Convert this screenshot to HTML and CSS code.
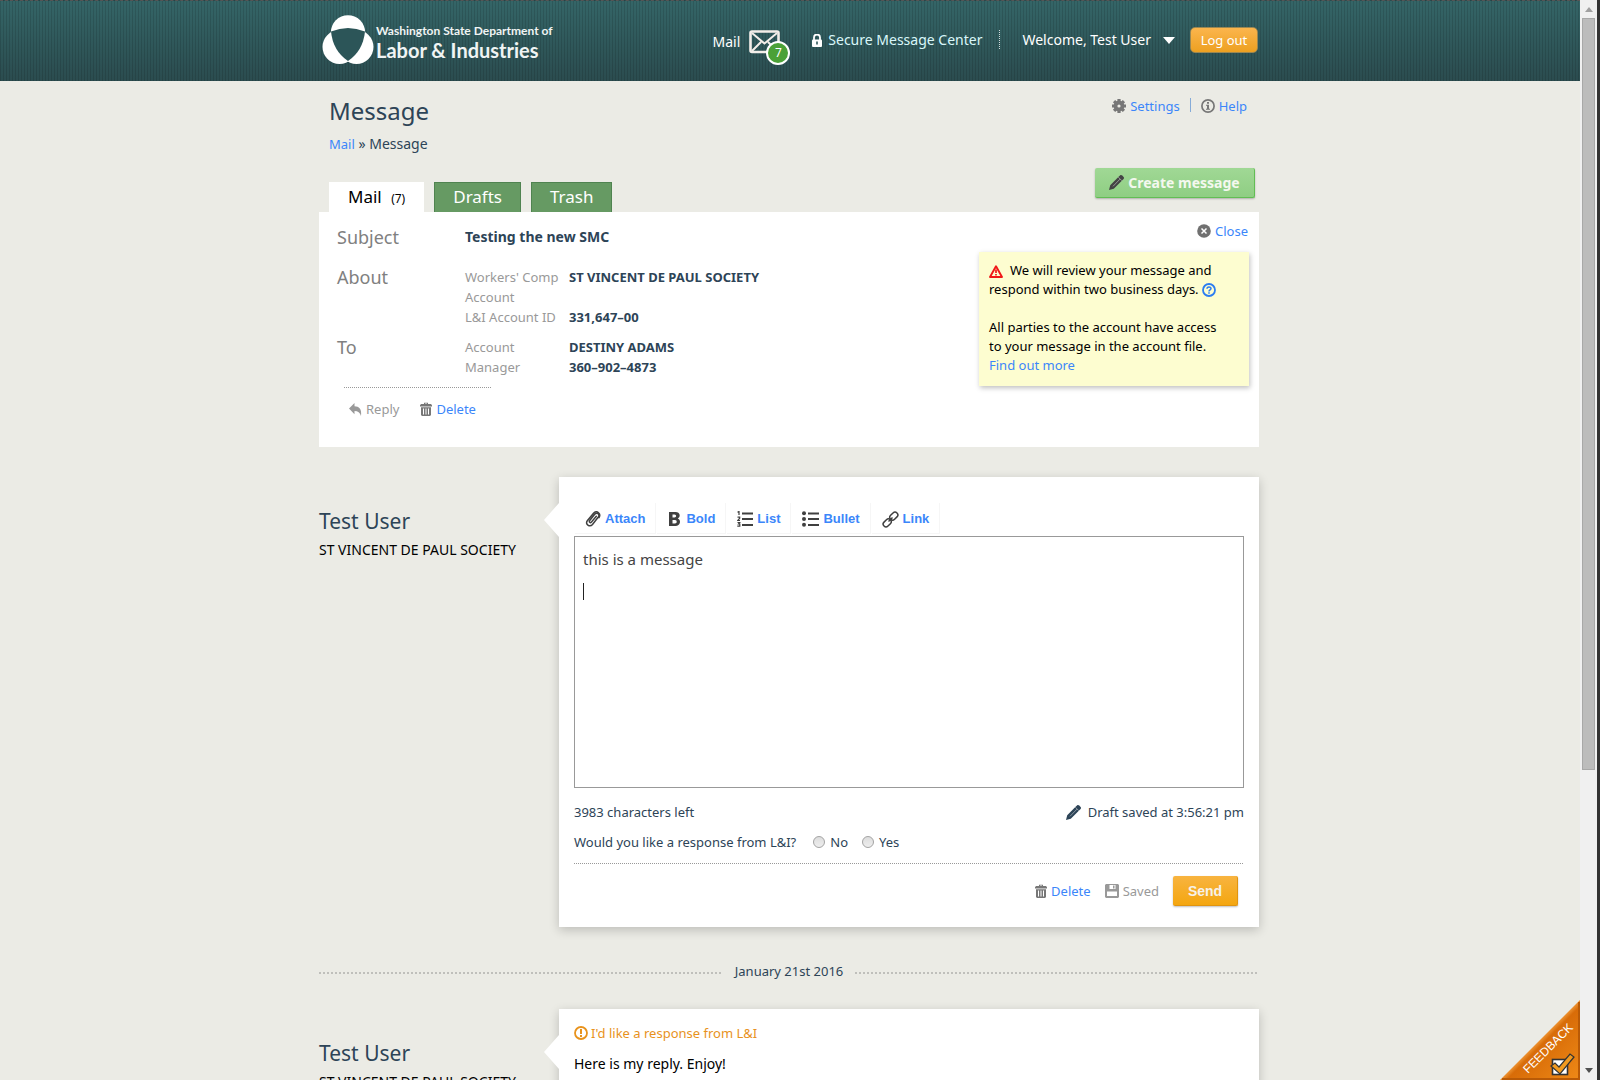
FILE: index.html
```html
<!DOCTYPE html>
<html lang="en">
<head>
<meta charset="utf-8">
<title>Message - Secure Message Center</title>
<link rel="stylesheet" href="styles.css">
</head>
<body>
<svg class="defs" aria-hidden="true">
  <symbol id="trash" viewBox="0 0 12 14"><path d="M4 2V.8h4V2h3l1 1.200V4.500H0V3.200L1 2zM5 1.600V2h2v-.4zM1 5.300h10V13l-1 1H2l-1-1zm2 1.200V12.500h1V6.500zm2.500 0V12.500h1V6.500zM8 6.500V12.500h1V6.500z" fill="currentColor" fill-rule="evenodd"/></symbol>
  <symbol id="pencil" viewBox="0 0 15 15"><path d="M0 15l1.200-4.800L9.600 1.700 11 .4c.8-.6 1.600-.5 2.300.2l1.100 1.100c.7.700.8 1.500.2 2.300L4.800 13.700z" fill="currentColor"/><path d="M4 11.300l7-7.200M9.300 2.200l3.500 3.500" stroke="#fff" stroke-opacity=".55" stroke-width=".8"/></symbol>
</svg>
<div class="window">
  <div class="pane">
    <header class="top">
      <div class="wrap top-row">
        <a class="logo" href="#">
          <svg width="52" height="50" viewBox="0 0 52 50" aria-hidden="true"><circle cx="26" cy="17.500" r="17.200" fill="#fff"/><circle cx="17.500" cy="32" r="17" fill="#fff"/><circle cx="34.500" cy="32" r="17" fill="#fff"/><path d="M9 16.500Q26 9.500 43 16.500Q41 36 26 46Q11 36 9 16.500z" fill="#2c5558"/></svg>
          <span class="logo-text"><span class="logo-small">Washington State Department of</span><span class="logo-big">Labor &amp; Industries</span></span>
        </a>
        <nav class="account">
          <a class="mail" href="#">Mail
            <span class="envelope">
              <svg width="31" height="24" viewBox="0 0 31 24" aria-hidden="true"><rect x="1.500" y="1.500" width="28" height="20.500" rx="1.500" fill="none" stroke="#f3eee9" stroke-width="2.600"/><path d="M3 3l12.500 10.500L28 3M3 21l9-9M28 21l-9-9" fill="none" stroke="#f3eee9" stroke-width="2"/></svg>
              <span class="count">7</span>
            </span>
          </a>
          <a class="smc" href="#"><svg width="10" height="13" viewBox="0 0 10 13" aria-hidden="true"><path d="M2 6V3.500a3 3 0 0 1 6 0V6" fill="none" stroke="#fff" stroke-width="1.800"/><rect y="5.500" width="10" height="7.500" rx="1" fill="#fff"/><path d="M5 7.500v3" stroke="#2c5558" stroke-width="1.600"/></svg>Secure Message Center</a>
          <a class="user" href="#">Welcome, Test User<svg width="12" height="7" viewBox="0 0 12 7" aria-hidden="true"><path d="M0 0h12L6 7z" fill="#fff"/></svg></a>
          <button class="logout" type="button">Log out</button>
        </nav>
      </div>
    </header>

    <main class="wrap">
      <div class="heading">
        <div>
          <h1>Message</h1>
          <p class="crumbs"><a href="#">Mail</a> » Message</p>
        </div>
        <div class="tools">
          <a href="#"><svg width="14" height="14" viewBox="0 0 14 14" aria-hidden="true"><circle cx="7" cy="7" r="3.700" fill="none" stroke="#777" stroke-width="3.400"/><path d="M7 0v14M0 7h14M2.050 2.050l9.900 9.900M11.950 2.050l-9.900 9.900" stroke="#777" stroke-width="3.200"/><circle cx="7" cy="7" r="1.600" fill="#ebebe5"/></svg>Settings</a>
          <span class="bar"></span>
          <a href="#"><svg width="14" height="14" viewBox="0 0 14 14" aria-hidden="true"><circle cx="7" cy="7" r="6.100" fill="none" stroke="#777" stroke-width="1.700"/><path d="M6 3h2v1.700H6zM5 5.700h3v4h1v1H5v-1h1v-3H5z" fill="#777"/></svg>Help</a>
        </div>
      </div>
      <div class="tab-row">
        <nav class="tabs">
          <a class="tab current" href="#">Mail <small>(7)</small></a>
          <a class="tab" href="#">Drafts</a>
          <a class="tab" href="#">Trash</a>
        </nav>
        <button class="create" type="button"><svg width="15" height="15"><use href="#pencil"/></svg>Create message</button>
      </div>

      <section class="panel">
        <div class="details">
          <dl class="subject"><dt>Subject</dt><dd>Testing the new SMC</dd></dl>
          <dl><dt>About</dt><dd class="label">Workers' Comp<br>Account</dd><dd>ST VINCENT DE PAUL SOCIETY</dd><dd class="label id">L&amp;I Account ID</dd><dd>331,647–00</dd></dl>
          <dl><dt>To</dt><dd class="label">Account<br>Manager</dd><dd>DESTINY ADAMS<br>360–902–4873</dd></dl>
          <div class="actions">
            <span class="off"><svg width="13" height="13" viewBox="0 0 13 13" aria-hidden="true"><path d="M5.500 0v3.200C10 3.200 13 6 12 13 11 9.500 9 8 5.500 8v3.200L0 5.600z" fill="#999"/></svg>Reply</span>
            <a href="#"><svg class="grey" width="12" height="14"><use href="#trash"/></svg>Delete</a>
          </div>
        </div>
        <aside>
          <a class="close" href="#"><svg width="14" height="14" viewBox="0 0 14 14" aria-hidden="true"><circle cx="7" cy="7" r="6.800" fill="#707070"/><path d="M4.500 4.500l5 5M9.500 4.500l-5 5" stroke="#fff" stroke-width="1.500"/></svg>Close</a>
          <div class="note">
            <p><svg class="warn" width="14" height="13" viewBox="0 0 14 13" aria-hidden="true"><path d="M7 1.300L13 12H1z" fill="none" stroke="#f01818" stroke-width="1.900" stroke-linejoin="round"/><path d="M7 4.500v3.500M7 9v1.500" stroke="#f01818" stroke-width="1.700"/></svg>We will review your message and<br>respond within two business days. <svg class="ask" width="14" height="14" viewBox="0 0 14 14" aria-hidden="true"><circle cx="7" cy="7" r="6" fill="none" stroke="#2c7df0" stroke-width="1.800"/><path d="M5 5.700C5 3.500 9 3.500 9 5.500 9 6.800 7 6.800 7 8.400M7 9.300v1.500" fill="none" stroke="#2c7df0" stroke-width="1.500"/></svg></p>
            <p>All parties to the account have access<br>to your message in the account file.<br><a href="#">Find out more</a></p>
          </div>
        </aside>
      </section>

      <section class="entry">
        <div class="author"><h2>Test User</h2><p>ST VINCENT DE PAUL SOCIETY</p></div>
        <form class="card compose">
          <div class="toolbar">
            <button type="button"><svg width="16" height="17" viewBox="0 0 16 17" aria-hidden="true"><path d="M11.300 5.300L6.500 11c-1.300 1.400-3-.1-1.800-1.500L9.700 3.300c2.200-2.400 5.500.1 3.600 2.700L7.500 13.400C4.800 16.500-.3 13.300 2.300 9.700L8.500 2.200c3-3.200 8-.2 5.500 4.500" fill="none" stroke="#404040" stroke-width="1.500" stroke-linecap="round"/></svg>Attach</button>
            <button type="button"><svg width="15" height="16" viewBox="0 0 15 16" aria-hidden="true"><path d="M2 1h6.500c5 0 5.300 5.200 2.300 6.500C14.500 8.800 13.500 15 8.500 15H2zM5.500 3.500v3h2c2.200 0 2.200-3 0-3zM5.500 9v3.500H8c2.300 0 2.300-3.500 0-3.500z" fill="#404040" fill-rule="evenodd"/></svg>Bold</button>
            <button type="button"><svg width="16" height="16" viewBox="0 0 16 16" aria-hidden="true"><path d="M5 2.500h11M5 8h11M5 14h11" stroke="#404040" stroke-width="2.200"/><path d="M.5 1.200L2 .5V4M.5 6.200h2.200v1L.7 9.500h2.300M.5 11.500h2.200L1.500 13h1.300v2.200H.3" fill="none" stroke="#404040" stroke-width="1.200"/></svg>List</button>
            <button type="button"><svg width="17" height="16" viewBox="0 0 17 16" aria-hidden="true"><path d="M6 2.500h11M6 8h11M6 14h11" stroke="#404040" stroke-width="2.200"/><circle cx="2" cy="2.300" r="2" fill="#404040"/><circle cx="2" cy="8" r="2" fill="#404040"/><circle cx="2" cy="13.800" r="2" fill="#404040"/></svg>Bullet</button>
            <button type="button"><svg width="17" height="17" viewBox="0 0 17 17" aria-hidden="true"><g fill="none" stroke="#404040" stroke-width="1.500"><rect x="7.300" y="2.300" width="9" height="5.600" rx="2.800" transform="rotate(-45 11.800 5.100)"/><rect x=".7" y="9.100" width="9" height="5.600" rx="2.800" transform="rotate(-45 5.200 11.900)"/><path d="M6.500 10.500l4-4"/></g></svg>Link</button>
          </div>
          <div class="editor">
            <textarea aria-label="Message text" spellcheck="false">this is a message
</textarea>
            <span class="caret"></span>
          </div>
          <div class="status"><span>3983 characters left</span><span class="draft"><svg width="15" height="15"><use href="#pencil"/></svg>Draft saved at 3:56:21 pm</span></div>
          <fieldset>
            <legend>Would you like a response from L&amp;I?</legend>
            <label><input type="radio" name="response">No</label>
            <label><input type="radio" name="response">Yes</label>
          </fieldset>
          <div class="submit">
            <a href="#"><svg class="grey" width="12" height="14"><use href="#trash"/></svg>Delete</a>
            <span class="off"><svg width="14" height="14" viewBox="0 0 14 14" aria-hidden="true"><path d="M0 1l1-1h12l1 1v12l-1 1H1l-1-1zM2 7.500v4.500h10V7.500zM4.500 1v4h6V1zM8 1.500h1.500v3H8z" fill="#999" fill-rule="evenodd"/></svg>Saved</span>
            <button class="send" type="submit">Send</button>
          </div>
        </form>
      </section>

      <div class="date">January 21st 2016</div>

      <section class="entry">
        <div class="author"><h2>Test User</h2><p>ST VINCENT DE PAUL SOCIETY</p></div>
        <article class="card reply">
          <p class="wants"><svg width="14" height="14" viewBox="0 0 14 14" aria-hidden="true"><circle cx="7" cy="7" r="6" fill="none" stroke="#e8921c" stroke-width="1.800"/><path d="M7 3v5M7 9v2" stroke="#e8921c" stroke-width="2"/></svg>I'd like a response from L&amp;I</p>
          <p>Here is my reply. Enjoy!</p>
        </article>
      </section>
    </main>

    <a class="feedback" href="#">
      <svg width="80" height="80" viewBox="0 0 80 80" role="img" aria-label="Feedback">
        <defs><linearGradient id="corner" x1="0" y1="0" x2="1" y2="1"><stop offset=".48" stop-color="#f7a444"/><stop offset=".54" stop-color="#d86c08"/><stop offset="1" stop-color="#ef8a17"/></linearGradient></defs>
        <path d="M80 0V80H0z" fill="url(#corner)"/><path d="M79 2V79H2" fill="none" stroke="#b95a06" stroke-width="2"/>
        <text x="28" y="74" transform="rotate(-45 28 74)" font-size="12" fill="#fff">FEEDBACK</text>
        <rect x="52.500" y="59.500" width="15" height="15" fill="#fff" stroke="#333" stroke-width="1.600"/>
        <path d="M51 66l4-3 4 4 11-13 4 3-14 17z" fill="#f29a1f" stroke="#333" stroke-width="1.200"/>
      </svg>
    </a>
  </div>
  <div class="scrollbar" aria-hidden="true"><span class="up"></span><span class="thumb"></span><span class="down"></span></div>
</div>
</body>
</html>
```
FILE: styles.css
```css
* { box-sizing: border-box; }
body { margin: 0; background: #333; color: #2d4457; font: 13px/20px "Noto Sans", "Open Sans", sans-serif; }
h1, h2, p, dl, dd, fieldset { margin: 0; padding: 0; border: 0; font-weight: 400; }
a { color: #3b86fa; text-decoration: none; }
button { font: inherit; cursor: pointer; }
svg { flex: none; }
.defs { display: none; }
.window { display: flex; height: 100vh; padding-right: 3px; overflow: hidden; }
.pane { flex: 1; position: relative; overflow: hidden; background: #ebebe5; }
.wrap { width: 940px; margin: 0 auto; }

/* header */
.top { height: 81px; padding-right: 2px; border-top: 1px dashed #555; background: repeating-linear-gradient(90deg, rgba(0,0,0,.12) 0 1px, transparent 1px 3px), linear-gradient(#346567, #2b4c4f); }
.top-row { display: flex; justify-content: space-between; align-items: center; height: 80px; padding: 0 1px 2px 3px; }
.top a { color: #fff; font-size: 14px; }
.logo { display: flex; align-items: center; gap: 2px; }
.logo-text { display: flex; flex-direction: column; padding-top: 4px; color: #f0f4f4; font-family: Lato, sans-serif; font-weight: 700; white-space: nowrap; }
.logo-small { font-size: 12px; line-height: 16px; }
.logo-big { font-size: 20px; line-height: 22px; }
.account { display: flex; align-items: center; height: 40px; }
.account a { display: flex; align-items: center; }
.mail { gap: 9px; padding-top: 3px; margin-right: 21px; }
.envelope { position: relative; height: 24px; width: 42px; }
.envelope svg { display: block; }
.count { position: absolute; left: 17px; top: 11px; width: 24px; height: 24px; border: 2px solid #fff; border-radius: 50%; background: #4ba137; font-size: 12px; line-height: 20px; text-align: center; }
.smc { gap: 6px; padding-right: 17px; }
.account .smc { color: #d9f7fa; }
.user { gap: 12px; margin-right: 15px; padding-left: 23px; background: repeating-linear-gradient(#cfdcdc 0 1px, transparent 1px 2px) left / 1px 100% no-repeat; }
.logout { width: 68px; height: 26px; padding: 0; border: 1px solid #9b8752; border-radius: 5px; background: linear-gradient(#fbb54d, #eda021); color: #fff; font-size: 13px; line-height: 20px; }

/* title and tabs */
.pane main { width: 942px; padding: 15px 2px 0 0; }
.heading { display: flex; justify-content: space-between; padding: 0 12px 0 10px; height: 72px; }
h1 { font-size: 24px; line-height: 30px; }
.crumbs { margin-top: 8px; font-size: 14px; }
.crumbs a { font-size: 13px; }
.tools { display: flex; gap: 10px; height: 19px; }
.tools a, .actions a, .submit a, .off, .close { display: flex; align-items: center; gap: 4px; }
.bar { width: 1px; height: 14px; margin-top: 2px; background: #85abd8; }
.tab-row { display: flex; justify-content: space-between; align-items: flex-end; height: 44px; padding: 0 4px 0 10px; }
.tabs { display: flex; gap: 10px; }
.tab { height: 30px; padding: 0 18px; border: 1px solid #4f8350; border-bottom: 0; background: #669a63; color: #fff; font-size: 17px; line-height: 28px; }
.tab.current { border-color: #fff; background: #fff; color: #000; }
.tab small { margin-left: 5px; font-size: 12px; }
.create { display: flex; align-items: center; justify-content: center; gap: 4px; width: 160px; height: 30px; margin-bottom: 14px; padding: 0; border: 0; border-right: 1px solid #62bd54; border-bottom: 1px solid #62bd54; border-radius: 2px; background: linear-gradient(#a0d895, #8fce83); color: #f4f8ef; font-size: 14px; font-weight: 700; box-shadow: 0 1px 2px rgba(0,0,0,.25); }
.create svg { color: #444; }

/* message details */
.panel { display: flex; justify-content: space-between; height: 235px; padding: 9px 10px 0 18px; background: #fff; }
.panel dl { display: grid; grid-template-columns: 128px 104px auto; margin-bottom: 10px; }
.panel .subject { grid-template-columns: 128px auto; padding: 6px 0 5px; margin: 0 0 15px; }
dt { color: #808080; font-size: 18px; }
dd { font-weight: 700; white-space: nowrap; }
.subject dd { font-size: 14px; }
dd.label { color: #999; font-weight: 400; }
dd.id { grid-column: 2; }
.actions { display: flex; gap: 21px; margin-left: 7px; padding: 12px 0 0 5px; background: repeating-linear-gradient(90deg, #999 0 1px, transparent 1px 2px) top left / 148px 1px no-repeat; }
.off { color: #999; }
.grey { color: #777; }
aside { width: 270px; }
.close { justify-content: flex-end; padding-right: 1px; margin-bottom: 11px; }
.note { padding: 9px 10px 11px; background: #fdfdd0; color: #000; line-height: 19px; white-space: nowrap; box-shadow: 1px 2px 5px rgba(0,0,0,.25); }
.note p + p { margin-top: 19px; }
.warn { margin-right: 7px; vertical-align: -3px; }
.ask { vertical-align: -3px; }

/* conversation */
.entry { display: grid; grid-template-columns: 240px 1fr; margin-top: 30px; }
.author { padding-top: 31px; }
h2 { font-size: 21px; line-height: 26px; }
.author p { margin-top: 6px; color: #000; font-size: 14px; white-space: nowrap; }
.card { position: relative; padding: 26px 15px 21px; background: #fff; box-shadow: 0 3px 10px rgba(0,0,0,.2); }
.card::before { content: ""; position: absolute; left: -15px; top: 26px; border: solid transparent; border-width: 17px 15px 17px 0; border-right-color: #fff; }
.toolbar { display: flex; gap: 1px; margin: 0 1px; }
.toolbar button { display: flex; align-items: center; gap: 4px; height: 31px; padding: 2px 10px 0; border: 0; border-right: 1px solid #f6f6f6; border-bottom: 1px solid #f6f6f6; background: #fff; color: #3b86fa; font: bold 13px/20px "Liberation Sans", Arial, sans-serif; }
.editor { position: relative; margin-top: 2px; }
textarea { display: block; width: 100%; height: 252px; padding: 7px 8px; border: 1px solid #999; background: #fff; color: #444; font: 15px/31px "Noto Sans", sans-serif; resize: none; outline: 0; }
.caret { position: absolute; left: 9px; top: 47px; width: 1px; height: 17px; background: #222; }
.status { display: flex; justify-content: space-between; margin-top: 14px; }
.draft { display: flex; align-items: center; gap: 7px; }
fieldset { display: flex; align-items: center; gap: 14px; height: 42px; padding-bottom: 2px; background: repeating-linear-gradient(90deg, #999 0 1px, transparent 1px 2px) bottom left / 100% 1px no-repeat; }
legend { float: left; margin-right: 3px; padding: 0; }
label { display: flex; align-items: center; gap: 5px; }
input[type="radio"] { appearance: none; width: 12px; height: 12px; margin: 0; border: 1px solid #a3a3a3; border-radius: 50%; background: linear-gradient(#ddd, #eee); }
.submit { display: flex; align-items: center; justify-content: flex-end; gap: 14px; margin-top: 12px; padding-right: 6px; }
.send { width: 65px; height: 30px; padding: 0; border: 0; border-right: 1px solid #e09410; border-bottom: 1px solid #e09410; border-radius: 2px; background: linear-gradient(#f8b440, #f4a610); color: #f6f2ea; font: bold 14px/20px "Liberation Sans", Arial, sans-serif; box-shadow: 0 1px 2px rgba(0,0,0,.25); }
.date { display: flex; align-items: center; gap: 12px; margin-top: 34px; }
.date::before, .date::after { content: ""; flex: 1; height: 2px; margin-top: 4px; background: repeating-linear-gradient(90deg, #bfbfbb 0 2px, transparent 2px 4px); }
.date + .entry { margin-top: 28px; }
.reply { padding-top: 14px; color: #000; font-size: 14px; }
.wants { display: flex; align-items: center; gap: 3px; margin-bottom: 11px; color: #e8921c; font-size: 13px; }
.feedback { position: absolute; right: 0; bottom: 0; height: 80px; font-family: "Liberation Sans", Arial, sans-serif; }

/* scrollbar */
.scrollbar { display: flex; flex-direction: column; align-items: center; width: 17px; padding: 7px 0; background: #f0f0f0; }
.up, .down { border: 4px solid transparent; }
.up { border-top: 0; border-bottom: 5px solid #a0a0a0; }
.down { margin-top: auto; border-bottom: 0; border-top: 5px solid #505050; }
.thumb { width: 13px; height: calc(70% + 6px); margin-top: 6px; border: 1px solid #a8a8a8; background: #bcbcbc; }
```
